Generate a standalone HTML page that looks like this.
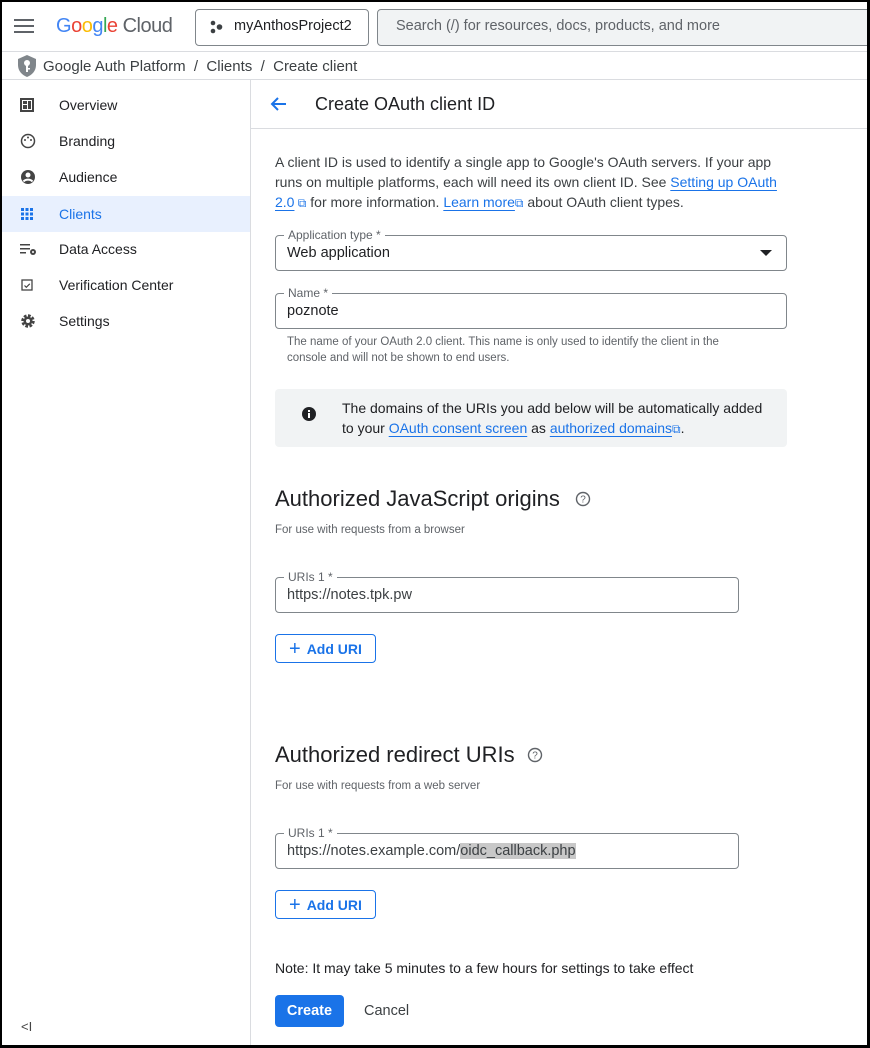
<!DOCTYPE html>
<html><head><meta charset="utf-8"><style>
*{box-sizing:border-box;margin:0;padding:0}
body{width:870px;height:1048px;overflow:hidden;background:#000;font-family:"Liberation Sans",Arial,sans-serif;color:#202124}
#f{position:absolute;left:2px;top:2px;width:865px;height:1043px;background:#fff;overflow:hidden}
.a{position:absolute}
a{color:#1a73e8;text-decoration:underline;text-underline-offset:3px}
.nav{position:absolute;left:0;width:248px;height:36px;font-size:14px;display:flex;align-items:center}
.nav span{position:absolute;left:57px}
.nav svg{position:absolute;left:18px}
.fld{position:absolute;border:1px solid #80868b;border-radius:4px;font-size:14.5px;padding-left:11px;display:flex;align-items:center}
.lbl{position:absolute;top:-8px;left:8px;background:#fff;padding:0 4px;font-size:12px;color:#5f6368;line-height:14px}
.btn{position:absolute;border:1px solid #1a73e8;border-radius:4px;color:#1a73e8;font-size:14px;font-weight:bold;display:flex;align-items:center;padding-left:13px}
h2{position:absolute;font-weight:normal;font-size:22px;color:#202124}
.sm{position:absolute;font-size:11.5px;color:#5f6368}
</style></head><body><div id="f">
<div class="a" style="left:0;top:0;width:865px;height:50px;border-bottom:1px solid #dadce0"></div>
<svg class="a" style="left:12px;top:17px" width="20" height="14"><rect y="0" width="20" height="2" fill="#5f6368"/><rect y="6" width="20" height="2" fill="#5f6368"/><rect y="12" width="20" height="2" fill="#5f6368"/></svg>
<div class="a" style="left:54px;top:13px;font-size:20px;letter-spacing:-0.5px"><span style="color:#4285f4">G</span><span style="color:#ea4335">o</span><span style="color:#fbbc04">o</span><span style="color:#4285f4">g</span><span style="color:#34a853">l</span><span style="color:#ea4335">e</span> <span style="color:#5f6368">Cloud</span></div>
<div class="a" style="left:193px;top:7px;width:174px;height:37px;border:1px solid #80868b;border-radius:4px"></div>
<svg class="a" style="left:208px;top:18px" width="14" height="14"><circle cx="3" cy="3" r="2.3" fill="#3c4043"/><circle cx="9.5" cy="7" r="2.8" fill="#3c4043"/><circle cx="3" cy="11" r="2.3" fill="#3c4043"/></svg>
<div class="a" style="left:232px;top:16px;font-size:14.5px">myAnthosProject2</div>
<div class="a" style="left:375px;top:7px;width:500px;height:37px;border:1px solid #80868b;border-radius:4px;background:#f1f3f4"></div>
<div class="a" style="left:394px;top:16px;font-size:14.5px;color:#5f6368">Search (/) for resources, docs, products, and more</div>
<div class="a" style="left:0;top:50px;width:865px;height:28px;border-bottom:1px solid #dadce0"></div>
<svg class="a" style="left:16px;top:53px" width="18" height="22" viewBox="0 0 18 22"><path d="M9 0L0 4v6c0 6 4 10 9 12 5-2 9-6 9-12V4z" fill="#80868b"/><circle cx="9" cy="8" r="3" fill="#fff"/><rect x="8" y="10" width="2" height="7" fill="#fff"/><rect x="10" y="13" width="2" height="1.5" fill="#fff"/></svg>
<div class="a" style="left:41px;top:56px;font-size:15px;color:#3c4043">Google Auth Platform &nbsp;/&nbsp; Clients &nbsp;/&nbsp; Create client</div>
<div class="a" style="left:248px;top:78px;width:1px;height:970px;background:#dadce0"></div>
<div class="nav" style="top:85px"><svg width="14" height="14"><rect x="1" y="1" width="12" height="12" fill="none" stroke="#444" stroke-width="2"/><rect x="3" y="3" width="4" height="3" fill="#444"/><rect x="8" y="3" width="3" height="8" fill="#444"/><rect x="3" y="7" width="4" height="4" fill="#444"/></svg><span>Overview</span></div>
<div class="nav" style="top:121px"><svg width="16" height="16"><circle cx="8" cy="8" r="6.5" fill="none" stroke="#444" stroke-width="1.5"/><circle cx="5" cy="7" r="1" fill="#444"/><circle cx="8" cy="4.5" r="1" fill="#444"/><circle cx="11" cy="7" r="1" fill="#444"/></svg><span>Branding</span></div>
<div class="nav" style="top:157px"><svg width="16" height="16"><circle cx="8" cy="8" r="7" fill="#444"/><circle cx="8" cy="6" r="2.5" fill="#fff"/><path d="M3.5 12.5c2-2.5 7-2.5 9 0" stroke="#fff" stroke-width="2" fill="none"/></svg><span>Audience</span></div>
<div class="nav" style="top:194px;background:#e8f0fe;color:#1a73e8"><svg width="14" height="14" fill="#1a73e8"><rect x="1" y="1" width="3" height="3"/><rect x="5.5" y="1" width="3" height="3"/><rect x="10" y="1" width="3" height="3"/><rect x="1" y="5.5" width="3" height="3"/><rect x="5.5" y="5.5" width="3" height="3"/><rect x="10" y="5.5" width="3" height="3"/><rect x="1" y="10" width="3" height="3"/><rect x="5.5" y="10" width="3" height="3"/><rect x="10" y="10" width="3" height="3"/></svg><span>Clients</span></div>
<div class="nav" style="top:229px"><svg width="17" height="14"><rect y="2" width="10" height="1.5" fill="#444"/><rect y="6" width="10" height="1.5" fill="#444"/><rect y="10" width="6" height="1.5" fill="#444"/><circle cx="13" cy="10" r="3" fill="#444"/><circle cx="13" cy="10" r="1" fill="#fff"/></svg><span>Data Access</span></div>
<div class="nav" style="top:265px"><svg width="14" height="14"><rect x="2" y="2" width="10" height="10" fill="none" stroke="#444" stroke-width="1.3"/><path d="M4.5 7.5l1.8 1.8 3.5-3.5" stroke="#444" stroke-width="1.2" fill="none"/></svg><span>Verification Center</span></div>
<div class="nav" style="top:301px"><svg width="16" height="16"><circle cx="8" cy="8" r="5" fill="none" stroke="#444" stroke-width="3.5" stroke-dasharray="2.5 1.4"/><circle cx="8" cy="8" r="4.5" fill="#444"/><circle cx="8" cy="8" r="2" fill="#fff"/></svg><span>Settings</span></div>
<div class="a" style="left:19px;top:1017px;font-size:13px;color:#444">&lt;I</div>
<div class="a" style="left:249px;top:126px;width:620px;height:1px;background:#dadce0"></div>
<svg class="a" style="left:267px;top:94px" width="18" height="16"><path d="M17 8H3M9 2L3 8l6 6" stroke="#1a73e8" stroke-width="2" fill="none"/></svg>
<div class="a" style="left:313px;top:92px;font-size:18px">Create OAuth client ID</div>
<div class="a" style="left:273px;top:150px;width:510px;font-size:14px;line-height:20px;color:#3c4043">A client ID is used to identify a single app to Google's OAuth servers. If your app runs on multiple platforms, each will need its own client ID. See <a>Setting up OAuth 2.0</a><span style="color:#1a73e8;font-size:12px"> ⧉</span> for more information. <a>Learn more</a><span style="color:#1a73e8;font-size:12px">⧉</span> about OAuth client types.</div>
<div class="fld" style="left:273px;top:233px;width:512px;height:36px">Web application<div class="lbl">Application type *</div><svg class="a" style="right:14px;top:14px" width="12" height="6"><path d="M0 0h12L6 6z" fill="#202124"/></svg></div>
<div class="fld" style="left:273px;top:291px;width:512px;height:36px">poznote<div class="lbl">Name *</div></div>
<div class="sm" style="left:285px;top:332px;width:470px;line-height:16px">The name of your OAuth 2.0 client. This name is only used to identify the client in the console and will not be shown to end users.</div>
<div class="a" style="left:273px;top:387px;width:512px;height:58px;background:#f1f3f4;border-radius:4px"></div>
<svg class="a" style="left:300px;top:405px" width="14" height="14"><circle cx="7" cy="7" r="7" fill="#202124"/><rect x="6" y="6" width="2" height="5" fill="#fff"/><rect x="6" y="3" width="2" height="2" fill="#fff"/></svg>
<div class="a" style="left:340px;top:396px;width:425px;font-size:14px;line-height:20px;color:#202124">The domains of the URIs you add below will be automatically added to your <a>OAuth consent screen</a> as <a>authorized domains</a><span style="color:#1a73e8;font-size:12px">⧉</span>.</div>
<h2 style="left:273px;top:484px">Authorized JavaScript origins</h2>
<svg class="a" style="left:573px;top:489px" width="16" height="16"><circle cx="8" cy="8" r="6.5" fill="none" stroke="#5f6368" stroke-width="1.4"/><text x="8" y="11.5" font-size="10" text-anchor="middle" fill="#5f6368" font-family="Liberation Sans">?</text></svg>
<div class="sm" style="left:273px;top:522px">For use with requests from a browser</div>
<div class="fld" style="left:273px;top:575px;width:464px;height:36px;color:#3c4043">https://notes.tpk.pw<div class="lbl">URIs 1 *</div></div>
<div class="btn" style="left:273px;top:632px;width:101px;height:29px"><span style="font-size:20px;font-weight:normal;margin-right:6px;line-height:1">+</span>Add URI</div>
<h2 style="left:273px;top:740px">Authorized redirect URIs</h2>
<svg class="a" style="left:525px;top:745px" width="16" height="16"><circle cx="8" cy="8" r="6.5" fill="none" stroke="#5f6368" stroke-width="1.4"/><text x="8" y="11.5" font-size="10" text-anchor="middle" fill="#5f6368" font-family="Liberation Sans">?</text></svg>
<div class="sm" style="left:273px;top:778px">For use with requests from a web server</div>
<div class="fld" style="left:273px;top:831px;width:464px;height:36px;color:#3c4043">https://notes.example.com/<span style="background:#c8c8c8">oidc_callback.php</span><div class="lbl">URIs 1 *</div></div>
<div class="btn" style="left:273px;top:888px;width:101px;height:29px"><span style="font-size:20px;font-weight:normal;margin-right:6px;line-height:1">+</span>Add URI</div>
<div class="a" style="left:273px;top:958px;font-size:14px">Note: It may take 5 minutes to a few hours for settings to take effect</div>
<div class="a" style="left:273px;top:993px;width:69px;height:32px;background:#1a73e8;border-radius:4px;color:#fff;font-weight:bold;font-size:14.5px;display:flex;align-items:center;justify-content:center">Create</div>
<div class="a" style="left:362px;top:1001px;font-size:14.5px;color:#3c4043">Cancel</div>
</div></body></html>
